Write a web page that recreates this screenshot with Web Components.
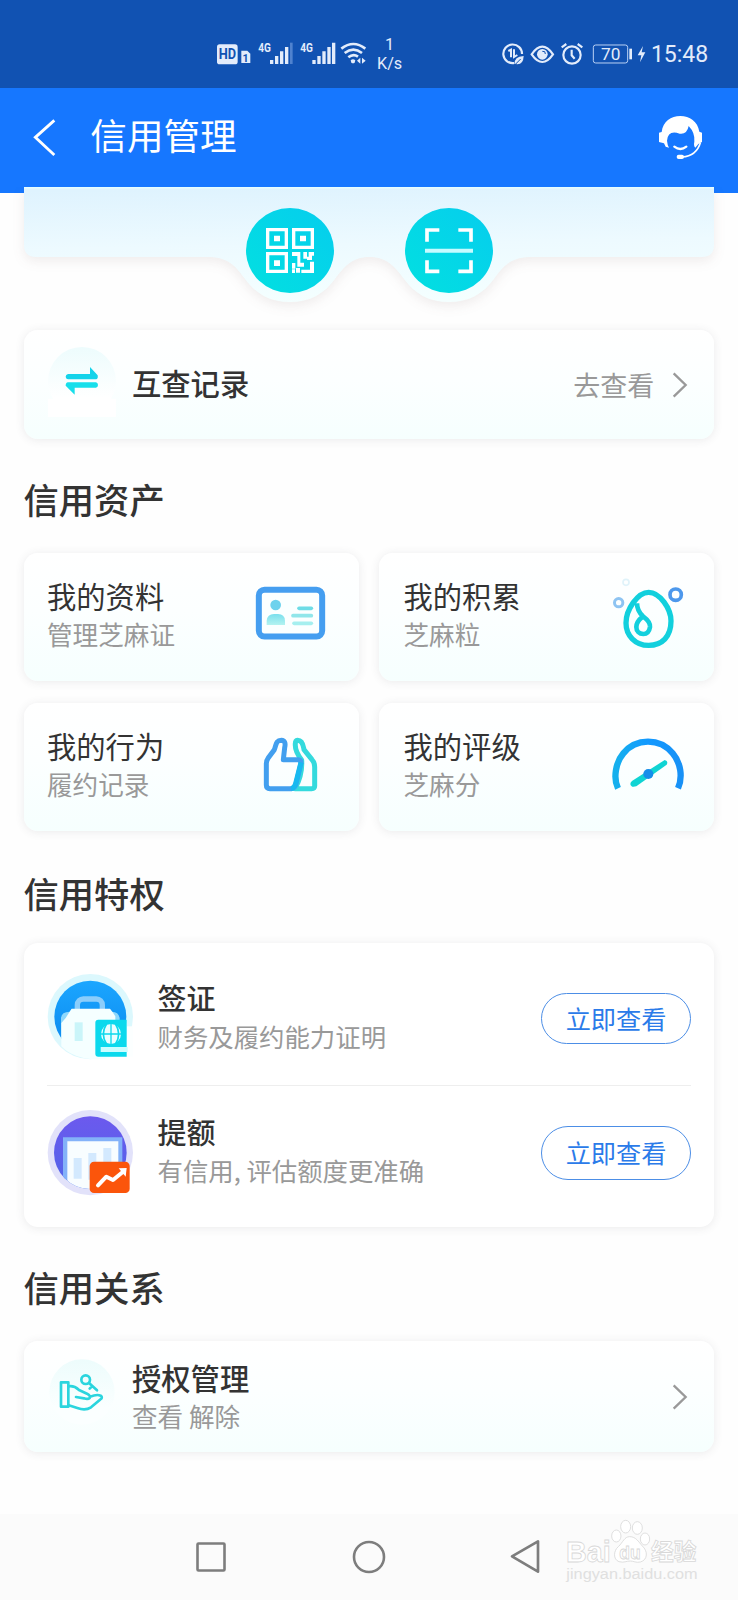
<!DOCTYPE html>
<html lang="zh-CN">
<head>
<meta charset="utf-8">
<title>信用管理</title>
<style>
html,body{margin:0;padding:0;background:#fefefe}
body{width:738px;height:1600px;overflow:hidden;font-family:"Noto Sans CJK SC","Noto Sans",sans-serif;color:#333}
</style>
</head>
<body>
<credit-app></credit-app>
<script>
const ICONS = {
hd:['45 65 110 70',`<rect x="51" y="72" width="62" height="60" rx="8" fill="#e3ecfb"/><text x="82" y="117" font-size="42" font-weight="700" text-anchor="middle" textLength="52" lengthAdjust="spacingAndGlyphs" fill="#1152b2">HD</text><path d="M124 91h18l9 9v28h-27z" fill="#e3ecfb"/><text x="137" y="124" font-size="32" font-weight="700" text-anchor="middle" fill="#1152b2">1</text>`],
sig1:['171 60 110 78',`<text x="175" y="97" font-size="40" font-weight="700" textLength="38" lengthAdjust="spacingAndGlyphs" fill="#e3ecfb">4G</text><path d="M210 120h10v12h-10zM225 108h10v24h-10zM240 94h10v38h-10zM255 81h10v51h-10z" fill="#e3ecfb"/><path d="M270 68h8v64h-8z" fill="#4f82cf"/>`],
sig2:['296 60 110 78',`<text x="300" y="97" font-size="40" font-weight="700" textLength="38" lengthAdjust="spacingAndGlyphs" fill="#e3ecfb">4G</text><path d="M336 120h10v12h-10zM351 108h10v24h-10zM366 94h10v38h-10zM381 81h10v51h-10zM395 68h10v64h-10z" fill="#e3ecfb"/>`],
wifi:['420 60 80 78',`<g fill="none" stroke="#e3ecfb" stroke-width="8"><path d="M424 86q36-28 72 0M434 99q26-20 52 0M445 112q15-12 29-2"/></g><path d="M452 121q7-6 14 0l-2 7q-5 3-10 0zM471 122l10-9v18zM486 113l11 9-11 9z" fill="#e3ecfb"/>`],
data:['62 64 72 72',`<g fill="none" stroke="#e3ecfb" stroke-width="6.5"><path d="M102 127A28 28 0 1 1 125 100"/><path d="M84 91l8-4v23M101 86v23l10-6" stroke-width="6"/></g><path d="M103 130q-2-22 27-24q-1 28-24 24z" fill="#e3ecfb"/><path d="M104 132l17-17" stroke="#1152b2" stroke-width="3"/>`],
eye:['150 64 74 72',`<path d="M155 101Q187 55 219 101Q187 147 155 101Z" fill="none" stroke="#e3ecfb" stroke-width="6.5"/><circle cx="187" cy="101" r="16" fill="#e3ecfb"/><path d="M187 92q10-2 9 8" fill="none" stroke="#1152b2" stroke-width="3"/>`],
alarm:['241 64 72 72',`<g fill="none" stroke="#e3ecfb" stroke-width="6.5"><circle cx="277" cy="103" r="26"/><path d="M276 87v17l9 10M246 80l14-10M308 80l-14-10"/></g>`],
batt:['335 68 126 64',`<rect x="339" y="74" width="103" height="54" rx="7" fill="none" stroke="#bcd2f5" stroke-width="3"/><path d="M447 85h8v32h-8z" fill="#e3ecfb"/><text x="391" y="119" font-size="52" text-anchor="middle" fill="#e3ecfb">70</text>`],
bolt:['470 74 28 54',`<path d="M488 77l-16 28h11l-4 21 16-30H484z" fill="#e3ecfb"/>`],
back:['99 112 70 116',`<path d="M163 119L106 170L163 223" fill="none" stroke="#fff" stroke-width="8.5"/>`],
service:['535 285 135 135',`<path d="M546 336C550 304 574 288 602 288S654 304 659 335L667 338V366L656 372L647 383Q641 377 644 365Q647 339 627 318Q622 344 600 341Q565 329 562 362Q563 374 568 383L558 380L553 370L538 366V338Z" fill="#fff"/><path d="M584 380Q602 394 620 380" fill="none" stroke="#fff" stroke-width="7" stroke-linecap="round"/><path d="M662 368Q651 407 607 411" fill="none" stroke="#fff" stroke-width="5"/><rect x="591" y="404" width="22" height="13" rx="6" fill="#fff"/>`],
qr:['108 143 144 136',`<g fill="none" stroke="#fff" stroke-width="10"><path d="M113 148h56v53h-56zM191 148h56v53h-56zM113 220h56v53h-56z"/></g><g fill="#fff"><path d="M132 166h18v17h-18zM210 166h18v17h-18zM132 240h18v17h-18zM186 215h25v32h11v12h-20v-32h-16zM220 215h11v20h-11zM236 215h16v11h-6v13h-15v-10h5zM186 248h10v17h-10zM198 263h12v14h-12zM186 267h9v11h-9zM240 244h12v34h-38v-10h26z"/></g>`],
scan:['586 143 144 136',`<g fill="none" stroke="#fff" stroke-width="11"><path d="M592 184v-35h37M686 149h38v35M592 240v33h37M686 273h38v-33"/></g><path d="M586 205h144v12H586z" fill="#c6fbff"/>`],
swap:['144 80 210 210',`<defs><linearGradient id="f" x2="0" y2="1"><stop stop-color="#edfcfd"/><stop offset=".75" stop-color="#fff"/></linearGradient></defs><path d="M144 235h204v55H144z" fill="#fff"/><circle cx="246" cy="182" r="102" fill="url(#f)"/><path d="M204 161H270V140L293 165Q295 176 288 177H204Q197 175 197 169T204 161Z" fill="#15d3ea"/><path d="M288 186H204Q197 187 197 196L224 223V202H288Q294 200 294 194T288 186Z" fill="#17dfeb"/>`],
hand:['144 295 210 210',`<defs><linearGradient id="h" x2="0" y2="1"><stop stop-color="#edfcfc"/><stop offset=".75" stop-color="#fbffff"/></linearGradient></defs><circle cx="246" cy="397" r="98" fill="url(#h)"/><g fill="none" stroke="#2bd5de" stroke-width="8" stroke-linejoin="round" stroke-linecap="round"><path d="M183 368h22v73h-22z"/><circle cx="257" cy="360" r="13"/><path d="M267 370L291 392M276 380l-7 7M206 380Q222 377 237 391L261 402Q273 409 269 415Q264 420 252 416L228 412M270 411Q291 403 302 408Q310 414 300 420L273 443Q256 454 232 445L206 437"/></g>`],
id:['765 117 216 228',`<defs><linearGradient id="i" x2="0" y2="1"><stop stop-color="#7adfed"/><stop offset="1" stop-color="#b4f3f0"/></linearGradient></defs><rect x="776.500" y="149.500" width="190" height="140" rx="17" fill="#fbffff" stroke="#459ef0" stroke-width="18"/><circle cx="827" cy="195" r="16" fill="#6fd2ed"/><path d="M800 255V242Q802 222 822 222H834Q854 222 855 242V255Z" fill="url(#i)"/><g stroke-width="11" stroke-linecap="round"><path d="M897 205H934" stroke="#6ddce6"/><path d="M879 227H934" stroke="#90e6ea"/><path d="M882 250H934" stroke="#a5efef"/></g>`],
drop:['720 117 216 228',`<g fill="none"><circle cx="768" cy="127" r="9" stroke="#e0f3fa" stroke-width="5"/><circle cx="746" cy="188" r="12.5" stroke="#8ec4f2" stroke-width="9"/><circle cx="917" cy="164" r="17" stroke="#4d98ec" stroke-width="11"/><g stroke="#12d0dd" stroke-width="16"><path d="M836 157C870 157 903 207 903 243C903 290 876 316 836 316C795 316 768 286 768 249C768 209 803 157 836 157Z"/><path d="M801 190Q801 213 819 229C834 240 841 252 840 261C838 274 831 282 820 282C808 282 799 274 799 261C799 248 805 240 819 229" stroke-width="14"/></g></g>`],
thumb:['765 567 216 228',`<g fill="none" stroke-width="15" stroke-linejoin="round"><path d="M893 601C909 601 910 619 912 629L936 659Q944 667 944 681V738Q944 746 935 746H885Q908 704 905 660Q884 633 886 611Q886 602 893 601Z" stroke="#34dadd"/><path d="M844 601C827 601 829 614 823 629L804 655Q799 661 799 673V735Q799 746 810 746H873Q885 745 888 732L903 670Q904 660 894 659H850L854 623Q859 602 844 601Z" stroke="#429fef"/><path d="M903 667L888 726Q884 744 873 746" stroke="#17b9f0"/></g>`],
gauge:['720 567 216 228',`<defs><linearGradient id="g"><stop stop-color="#15b0ed"/><stop offset=".5" stop-color="#1299ff"/><stop offset="1" stop-color="#1891f6"/></linearGradient></defs><path d="M744 745C729 715 737 667 760 640C798 594 869 593 908 640C932 668 939 711 924 745" fill="none" stroke="url(#g)" stroke-width="19"/><path d="M787 722L884 660Q896 663 890 674L799 739Q783 744 781 732Q781 726 787 722Z" fill="#10d4d3"/><circle cx="835" cy="702" r="15" fill="#168eea"/>`],
visa:['140 343 258 258',`<defs><linearGradient id="v" x2="0" y2="1"><stop stop-color="#1ba6ff"/><stop offset="1" stop-color="#0a87ed"/></linearGradient><clipPath id="vc"><circle cx="270" cy="471" r="108"/></clipPath></defs><circle cx="270" cy="471" r="128" fill="#dcf8fd"/><circle cx="270" cy="471" r="108" fill="url(#v)"/><rect x="231" y="418" width="75" height="60" rx="18" fill="none" stroke="#8bcdfb" stroke-width="16"/><path d="M182 475Q184 456 208 456L214 448H328L335 456Q354 456 358 475V580H182Z" fill="#8ed8fc" clip-path="url(#vc)"/><path d="M207 458L214 447H329L337 458L345 470V590Q300 605 250 595Q205 585 183 560V490Q190 482 196 475Z" fill="#f5ffff"/><path d="M223 488h24v56h-24z" fill="#caf5f9"/><path d="M379 500H398V591H379Z" fill="#fcffff"/><path d="M294 480H379V591H294Q285 591 285 582V489Q285 480 294 480Z" fill="#0bd9ed"/><path d="M301 562H382V577H301z" fill="#cbfdff"/><circle cx="332" cy="523" r="30" fill="#e9feff"/><g fill="none" stroke="#0bd9ed" stroke-width="5"><path d="M302 523h60M318 494q-18 29 0 58M346 494q18 29 0 58"/><path d="M332 493v60" stroke-width="4"/></g>`],
quota:['140 748 258 258',`<defs><linearGradient id="q" x2="0" y2="1"><stop stop-color="#6c59ee"/><stop offset="1" stop-color="#5065e8"/></linearGradient><clipPath id="qc"><circle cx="270" cy="876" r="109"/></clipPath></defs><circle cx="270" cy="876" r="128" fill="#e2e2fa"/><circle cx="270" cy="876" r="109" fill="url(#q)"/><g clip-path="url(#qc)"><path d="M188 830h178v180H188z" fill="#83b2f9"/><path d="M201 842h153v170H201z" fill="#f8fdff"/><path d="M220 892h24v62h-24zM264 877h24v80h-24zM309 862h24v90h-24z" fill="#d3e9fe"/></g><rect x="268" y="903" width="120" height="94" rx="13" fill="#fb550b"/><path d="M293 974L318 948L338 958L371 931" fill="none" stroke="#fff" stroke-width="12" stroke-linecap="round" stroke-linejoin="round"/><path d="M355 923L379 922L376 948Z" fill="#fff"/>`],
next:['517 155 50 84',`<path d="M522 162L558 197L522 232" fill="none" stroke="#999" stroke-width="7"/>`],
recent:['0 0 34 34',`<rect x="3.500" y="3.500" width="27" height="27" rx="1" fill="none" stroke="#7d7d7d" stroke-width="2.600"/>`],
home:['0 0 34 34',`<circle cx="17" cy="17" r="15" fill="none" stroke="#7d7d7d" stroke-width="2.600"/>`],
navback:['30 118 90 104',`<path d="M36 170L114 125V216Z" fill="none" stroke="#7d7d7d" stroke-width="8" stroke-linejoin="round"/>`],
brand:['180 45 430 210',`<g font-family="Liberation Sans,sans-serif" fill="#fff" stroke="#d8d8d8" stroke-width="2.500"><text x="198" y="185" font-size="91" font-weight="700" textLength="134" lengthAdjust="spacingAndGlyphs">Bai</text><ellipse cx="377" cy="80" rx="15" ry="19"/><ellipse cx="412" cy="84" rx="15" ry="19"/><ellipse cx="349" cy="108" rx="14" ry="18"/><ellipse cx="435" cy="117" rx="14" ry="18"/><path d="M389 110C408 110 415 125 427 138C444 153 444 180 421 186C408 189 400 183 391 183C379 183 372 189 357 185C338 178 341 151 355 140C369 127 373 110 389 110Z"/><text x="358" y="177" font-size="57" font-weight="700" textLength="64" lengthAdjust="spacingAndGlyphs">du</text><text x="453" y="180" font-family="Noto Sans CJK SC" font-size="69" font-weight="700" textLength="136" lengthAdjust="spacingAndGlyphs">经验</text><text x="199" y="237" font-size="45" fill="#e0e0e0" stroke="none" font-weight="400" textLength="394" lengthAdjust="spacingAndGlyphs">jingyan.baidu.com</text></g>`]
};
function define(name, html, hook){
  const t = document.createElement('template');
  t.innerHTML = html;
  customElements.define(name, class extends HTMLElement{
    connectedCallback(){
      if(this.shadowRoot) return;
      this.attachShadow({mode:'open'}).append(t.content.cloneNode(true));
      if(hook) hook(this, this.shadowRoot);
    }
  });
}
define('ui-icon', `<style>:host{display:block;flex:none}svg{display:block;overflow:visible;font-family:Roboto,sans-serif}</style><div></div>`, (el, root)=>{
  const [box, art] = ICONS[el.getAttribute('name')];
  const [, , w, h] = box.split(' ').map(Number);
  const k = +(el.getAttribute('scale') || 3);
  root.querySelector('div').innerHTML = `<svg width="${w/k}" height="${h/k}" viewBox="${box}">${art}</svg>`;
});
define('status-bar', `<style>
:host{display:flex;align-items:flex-start;height:88px;box-sizing:border-box;padding-left:215px;background:#1152b2;color:#e3ecfb;font-family:Roboto,sans-serif}
ui-icon{margin-top:41.5px}
.speed{width:40px;margin:36px 30px 0 3px;text-align:center;font-size:16.2px;line-height:18.5px}
.time{font-size:23px;line-height:28px;margin:40.5px 0 0 5px}
</style>
<ui-icon name="hd"></ui-icon>
<ui-icon name="sig1" style="margin:40px 0 0 5.3px"></ui-icon>
<ui-icon name="sig2" style="margin:40px 0 0 5px"></ui-icon>
<ui-icon name="wifi" style="margin:40px 0 0 4.7px"></ui-icon>
<div class="speed">1<br>K/s</div>
<ui-icon name="data" style="margin-left:61px"></ui-icon>
<ui-icon name="eye" style="margin-left:5.3px"></ui-icon>
<ui-icon name="alarm" style="margin-left:5.7px"></ui-icon>
<ui-icon name="batt" style="margin:42.7px 0 0 7.3px"></ui-icon>
<ui-icon name="bolt" style="margin:44.7px 0 0 3px"></ui-icon>
<div class="time">15:48</div>`);
define('title-bar', `<style>
:host{display:flex;align-items:center;height:105px;box-sizing:border-box;padding:0 35px 7px 33px;background:#1677ff;color:#fff}
h1{flex:1;margin:-4px 0 0 34px;font-size:36.6px;font-weight:400;line-height:50px}
</style><ui-icon name="back"></ui-icon><h1><slot></slot></h1><ui-icon name="service"></ui-icon>`);
define('scan-panel', `<style>
:host{display:grid;position:relative;margin:-6px 24px 0;height:143px}
.bg,.row{grid-area:1/1}
.bg{display:block;overflow:visible;filter:drop-shadow(0 4px 6px rgba(90,60,60,.09));clip-path:inset(0 -20px -20px)}
.row{z-index:1;display:flex;justify-content:center;align-items:flex-start;gap:71px;padding:21px 0 0 1px}
.disc{display:grid;place-items:center;width:88px;height:85px;border-radius:50%;background:linear-gradient(45deg,#02e0e0,#06cdee)}
</style>
<svg class="bg" width="690" height="125" viewBox="0 0 690 125"><defs><linearGradient id="p" x1=".4" y1="0" x2=".5" y2="1"><stop stop-color="#dff3fe"/><stop offset=".5" stop-color="#edfaff"/><stop offset="1" stop-color="#f4ffff"/></linearGradient></defs><path fill="url(#p)" d="M0 0V58Q0 70 12 70H186C206 71 212 80 221 92C232 107 246 115 266 115S300 107 311 92C320 80 328 70 345.5 70S371 80 380 92C391 107 405 115 425 115S459 107 470 92C479 80 485 71 505 70H678Q690 70 690 58V0Z"/><path d="M0 .7H690" stroke="#e6fdff" stroke-width="1.4"/></svg>
<div class="row"><div class="disc"><ui-icon name="qr"></ui-icon></div><div class="disc"><ui-icon name="scan"></ui-icon></div></div>`);
const CARD = `border-radius:14px;box-sizing:border-box;background:linear-gradient(#fff 0%,#fcffff 45%,#f6fffe 100%);box-shadow:0 1px 10px rgba(60,60,70,.1)`;
define('link-card', `<style>
:host{display:flex;align-items:center;margin:0 24px;padding:0 25px 0 24px;${CARD}}
.lead{align-self:flex-start;margin-top:var(--lead,17px)}
.body{flex:1;margin:-5px 0 0 14px;font-size:29.3px;font-weight:500;line-height:40px}
.sub,.more{font-weight:400;color:#999}
.sub{font-size:25.6px;line-height:38px}
.more{font-size:27px;line-height:40px;margin-right:18px}
</style><div class="lead"><slot name="icon"></slot></div><div class="body"><slot></slot><div class="sub"><slot name="sub"></slot></div></div><div class="more"><slot name="more"></slot></div><ui-icon name="next"></ui-icon>`, (el, r)=>{
  if(!el.querySelector('[slot=sub]')) r.querySelector('.sub').remove();
  else r.querySelector('.body').style.marginTop = '-2px';
});
define('section-title', `<style>
:host{display:flex;align-items:center;box-sizing:border-box;height:114px;padding:5px 0 0 23.500px}
h2{margin:0;font-size:35.3px;line-height:50px;font-weight:500}
</style><h2><slot></slot></h2>`);
define('asset-tile', `<style>
:host{display:flex;justify-content:space-between;align-items:center;padding:0 32px 0 23px;color:#333;${CARD}}
.t{font-size:29.3px;line-height:40px;font-weight:400}
.s{font-size:25.6px;line-height:38px;color:#999}
.txt{margin:-6px 0 0 var(--dx,0)}
</style><div class="txt"><div class="t"><slot></slot></div><div class="s"><slot name="sub"></slot></div></div><slot name="icon"></slot>`);
define('asset-grid', `<style>:host{display:grid;grid-template-columns:335px 335px;grid-template-rows:128px 128px;gap:22px 20px;margin:0 24px}</style><slot></slot>`);
define('privilege-card', `<style>:host{display:block;margin:0 24px;height:284px;${CARD};background:#fff}</style><slot></slot>`);
define('privilege-row', `<style>
:host{display:flex;align-items:flex-start;box-sizing:border-box;margin:0 23px;height:142px;padding-top:31px}
:host([second]){border-top:1px solid #eee;padding-top:24px}
.txt{flex:1;margin:3px 0 0 24.500px}
:host([second]) .txt{margin-top:1px}
.t{font-size:29px;line-height:40px;font-weight:500}
.s{font-size:25.4px;line-height:38px;color:#999}
button{box-sizing:border-box;width:150px;height:51px;margin:19px 0 0;padding:0 0 2px;border:1.5px solid #4c8ee6;border-radius:27px;background:#fff;color:#2b7be9;font:400 25.2px/40px "Noto Sans CJK SC",sans-serif}
:host([second]) button{height:54px;margin-top:16px}
</style><slot name="icon"></slot><div class="txt"><div class="t"><slot></slot></div><div class="s"><slot name="sub"></slot></div></div><button>立即查看</button>`);
define('nav-bar', `<style>
:host{display:flex;position:relative;align-items:center;box-sizing:border-box;height:86px;padding:0 0 1px 194px;background:#fbfbfb}
.h{margin:0 124px}
.brand{position:absolute;left:560px;top:1px}
</style><ui-icon name="recent" scale="1"></ui-icon><ui-icon class="h" name="home" scale="1"></ui-icon><ui-icon name="navback"></ui-icon><ui-icon class="brand" name="brand"></ui-icon>`);
define('credit-app', `<style>
:host{display:flex;flex-direction:column;height:1600px;background:#fefefe}
nav-bar{margin-top:auto}
</style>
<status-bar></status-bar>
<title-bar>信用管理</title-bar>
<scan-panel></scan-panel>
<link-card style="height:109px"><ui-icon slot="icon" name="swap"></ui-icon>互查记录<span slot="more">去查看</span></link-card>
<section-title>信用资产</section-title>
<asset-grid>
<asset-tile>我的资料<span slot="sub">管理芝麻证</span><ui-icon slot="icon" name="id"></ui-icon></asset-tile>
<asset-tile style="--dx:1.5px">我的积累<span slot="sub">芝麻粒</span><ui-icon slot="icon" name="drop"></ui-icon></asset-tile>
<asset-tile>我的行为<span slot="sub">履约记录</span><ui-icon slot="icon" name="thumb"></ui-icon></asset-tile>
<asset-tile style="--dx:1.5px">我的评级<span slot="sub">芝麻分</span><ui-icon slot="icon" name="gauge"></ui-icon></asset-tile>
</asset-grid>
<section-title style="height:112px;padding-top:12px">信用特权</section-title>
<privilege-card>
<privilege-row><ui-icon slot="icon" name="visa"></ui-icon>签证<span slot="sub">财务及履约能力证明</span></privilege-row>
<privilege-row second><ui-icon slot="icon" name="quota"></ui-icon>提额<span slot="sub">有信用, 评估额度更准确</span></privilege-row>
</privilege-card>
<section-title>信用关系</section-title>
<link-card style="height:111px"><ui-icon slot="icon" name="hand"></ui-icon>授权管理<span slot="sub">查看 解除</span></link-card>
<nav-bar></nav-bar>`);
</script>
</body>
</html>
